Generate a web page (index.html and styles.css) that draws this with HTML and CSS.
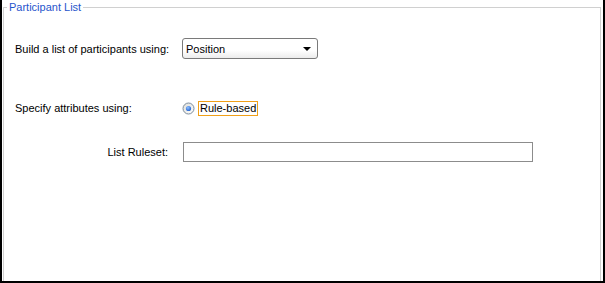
FILE: index.html
```html
<!DOCTYPE html>
<html lang="en">
<head>
    <meta charset="UTF-8">
    <title>Participant List</title>
    <link rel="stylesheet" href="styles.css">
</head>
<body>
    <div class="panel">
        <fieldset class="group">
            <legend>Participant List</legend>

            <!-- Build list -->
            <div class="row row-build">
                <label class="row-label">Build a list of participants using:</label>
                <div class="select">
                    <span>Position</span>
                    <svg class="select-arrow" width="8" height="4" viewBox="0 0 8 4"><path d="M0 0H8L4 4Z" fill="#000"/></svg>
                </div>
            </div>

            <!-- Attributes -->
            <div class="row row-attr">
                <label class="row-label">Specify attributes using:</label>
                <div class="radio">
                    <svg width="13" height="13" viewBox="0 0 13 13">
                        <defs>
                            <linearGradient id="rbg" x1="0" y1="0" x2="1" y2="1">
                                <stop offset="0" stop-color="#dcdcd6"/>
                                <stop offset="1" stop-color="#ffffff"/>
                            </linearGradient>
                            <radialGradient id="dot" cx="0.4" cy="0.35" r="0.7">
                                <stop offset="0" stop-color="#8fc0ff"/>
                                <stop offset="1" stop-color="#1d5fd0"/>
                            </radialGradient>
                        </defs>
                        <circle cx="6.5" cy="6.5" r="5.5" fill="url(#rbg)" stroke="#7c8c9c"/>
                        <circle cx="6.5" cy="6.5" r="2.6" fill="url(#dot)"/>
                    </svg>
                    <span class="radio-text">Rule-based</span>
                </div>
            </div>

            <!-- Ruleset -->
            <div class="row row-ruleset">
                <label class="row-label right">List Ruleset:</label>
                <input class="text-input" type="text">
            </div>
        </fieldset>
    </div>
</body>
</html>
```

FILE: styles.css
```css
/* ====== Base ====== */
* {
    box-sizing: border-box;
}

body {
    margin: 0;
    background: #fff;
    font-family: "Liberation Sans", Arial, sans-serif;
    font-size: 11px;
    color: #000;
}

/* ====== Outer panel ====== */
.panel {
    width: 605px;
    height: 283px;
    border-left: 2px solid #000;
    border-right: 2px solid #000;
    border-bottom: 2px solid #000;
    display: flex;
}

.group {
    flex: 1;
    margin: 0 2px 0 1px;
    padding: 0;
    border: 1px solid #d0d0d0;
    border-bottom: none;
    min-width: 0;
}

.group legend {
    margin-left: 3px;
    padding: 0 2px;
    line-height: 15px;
    color: #1f55cc;
}

/* ====== Rows ====== */
.row {
    display: flex;
    align-items: center;
}

.row-build {
    margin-top: 23px;
}

.row-attr {
    margin-top: 40px;
}

.row-ruleset {
    margin-top: 25px;
}

.row-label {
    width: 178px;
    padding-left: 11px;
    flex-shrink: 0;
}

.row-label.right {
    text-align: right;
    padding-right: 14px;
}

/* ====== Controls ====== */
.select {
    width: 136px;
    height: 21px;
    border: 1px solid #7a7a7a;
    border-radius: 3px;
    background: linear-gradient(#ffffff 60%, #ececec);
    display: flex;
    align-items: center;
    justify-content: space-between;
    padding: 0 6px 0 3px;
}

.select-arrow {
    display: block;
}

.radio {
    display: flex;
    align-items: center;
    gap: 3px;
    height: 18px;
}

.radio svg {
    display: block;
}

.radio-text {
    border: 1px solid #f0a018;
    padding: 0 1px;
    line-height: 13px;
}

.text-input {
    width: 350px;
    height: 20px;
    margin: 0 0 0 1px;
    border: 1px solid #8c8c8c;
    background: #fff;
    padding: 0 3px;
    font: inherit;
}
```
